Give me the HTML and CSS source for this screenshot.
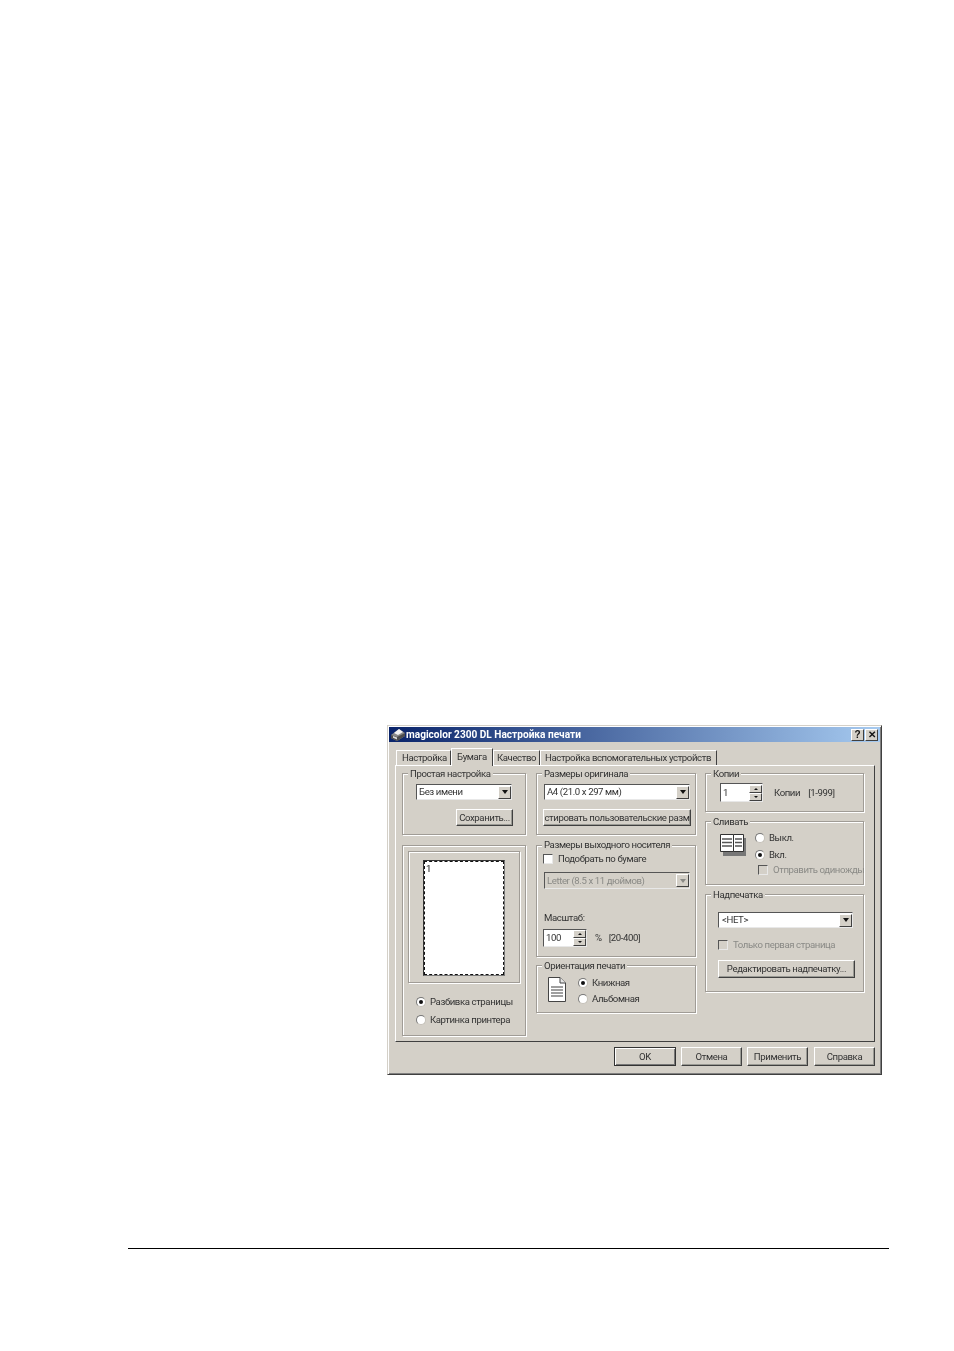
FILE: index.html
```html
<!DOCTYPE html>
<html lang="ru">
<head>
<meta charset="utf-8">
<title>magicolor 2300 DL</title>
<link rel="stylesheet" href="styles.css">
</head>
<body>
<main class="page">
  <section class="dialog">
    <header class="titlebar">
      <svg class="app-icon" width="14" height="12" viewBox="0 0 14 12">
        <path d="M0 6 L8 0 L14 4 L14 7 L6 12 L0 9Z" fill="#8a8a8a"/>
        <path d="M3 4 L8 0 L12 3 L7 6Z" fill="#f4f4f4"/>
        <path d="M0 6 L6 8 L14 4 L14 7 L6 12 L0 9Z" fill="#4c4c4c"/>
        <path d="M2 7 L6 8.5 L6 10.5 L2 8.8Z" fill="#dcdcdc"/>
      </svg>
      <span class="title-text">magicolor 2300 DL Настройка печати</span>
      <span class="title-buttons">
        <span class="cap-btn">?</span>
        <span class="cap-btn">✕</span>
      </span>
    </header>

    <nav class="tabs">
      <span class="tab tab-1">Настройка</span>
      <span class="tab tab-active">Бумага</span>
      <span class="tab tab-3">Качество</span>
      <span class="tab tab-4">Настройка вспомогательных устройств</span>
    </nav>

    <div class="panel">
      <div class="col col-1">
        <div class="group g-easy">
          <div class="legend">Простая настройка</div>
          <div class="combo combo-easy"><span class="combo-text">Без имени</span><span class="combo-arrow"><i></i></span></div>
          <div class="btn btn-save">Сохранить...</div>
        </div>
        <div class="group g-preview">
          <div class="preview-frame">
            <div class="sheet"><div class="sheet-inner">1</div></div>
          </div>
          <div class="radio-line rl-1"><span class="radio on"></span>Разбивка страницы</div>
          <div class="radio-line rl-2"><span class="radio"></span>Картинка принтера</div>
        </div>
      </div>

      <div class="col col-2">
        <div class="group g-orig">
          <div class="legend">Размеры оригинала</div>
          <div class="combo combo-orig"><span class="combo-text">A4 (21.0 x 297 мм)</span><span class="combo-arrow"><i></i></span></div>
          <div class="btn btn-custom">стировать пользовательские разм</div>
        </div>
        <div class="group g-out">
          <div class="legend legend-high">Размеры выходного носителя</div>
          <div class="check-line cl-fit"><span class="check"></span>Подобрать по бумаге</div>
          <div class="combo combo-out disabled"><span class="combo-text">Letter (8.5 x 11 дюймов)</span><span class="combo-arrow"><i></i></span></div>
          <div class="label-scale">Масштаб:</div>
          <div class="spin-line scale-line">
            <div class="spin spin-scale"><span class="spin-text">100</span><span class="spin-btns"><b><i class="up"></i></b><b><i></i></b></span></div>
            <span class="pct">%</span><span class="range">[20-400]</span>
          </div>
        </div>
        <div class="group g-orient">
          <div class="legend">Ориентация печати</div>
          <div class="orient-body">
            <svg class="doc-icon" width="18" height="25" viewBox="0 0 18 25">
              <path d="M.5.5H12L17.5 6V24.5H.5Z" fill="#fff" stroke="#444"/>
              <path d="M12 .5V6H17.5" fill="#e8e8e8" stroke="#444"/>
              <path d="M3 10H15M3 13H15M3 16H15M3 19H15" stroke="#808080" stroke-width="1.4"/>
            </svg>
            <div class="orient-options">
              <div class="radio-line"><span class="radio on"></span>Книжная</div>
              <div class="radio-line"><span class="radio"></span>Альбомная</div>
            </div>
          </div>
        </div>
      </div>

      <div class="col col-3">
        <div class="group g-copies">
          <div class="legend">Копии</div>
          <div class="spin-line copies-line">
            <div class="spin spin-copies"><span class="spin-text">1</span><span class="spin-btns"><b><i class="up"></i></b><b><i></i></b></span></div>
            <span class="copies-label">Копии</span><span class="range">[1-999]</span>
          </div>
        </div>
        <div class="group g-collate">
          <div class="legend">Сливать</div>
          <div class="collate-body">
            <svg class="collate-icon" width="26" height="22" viewBox="0 0 26 22">
              <path d="M3 4H26V22H3Z" fill="#777"/>
              <path d="M.5.5H13.5V17.5H.5Z" fill="#fff" stroke="#333"/>
              <path d="M2 5H12M2 8.5H12M2 12H12" stroke="#555" stroke-width="1.3"/>
              <path d="M13.5 .5H23.5V17.5H13.5Z" fill="#fff" stroke="#333"/>
              <path d="M15 5H22M15 8.5H22M15 12H22" stroke="#555" stroke-width="1.3"/>
            </svg>
            <div class="collate-options">
              <div class="radio-line"><span class="radio"></span>Выкл.</div>
              <div class="radio-line"><span class="radio on"></span>Вкл.</div>
            </div>
          </div>
          <div class="check-line cl-once disabled"><span class="check"></span>Отправить одиножды</div>
        </div>
        <div class="group g-stamp">
          <div class="legend">Надпечатка</div>
          <div class="combo combo-stamp"><span class="combo-text">&lt;НЕТ&gt;</span><span class="combo-arrow"><i></i></span></div>
          <div class="check-line cl-first disabled"><span class="check"></span>Только первая страница</div>
          <div class="btn btn-edit">Редактировать надпечатку...</div>
        </div>
      </div>
    </div>

    <footer class="actions">
      <div class="btn btn-ok">OK</div>
      <div class="btn btn-action">Отмена</div>
      <div class="btn btn-action">Применить</div>
      <div class="btn btn-action btn-help">Справка</div>
    </footer>
  </section>
  <hr class="rule">
</main>
</body>
</html>
```

FILE: styles.css
```css
* { box-sizing: border-box; }
html, body { margin: 0; padding: 0; background: #fff; }
.page { width: 954px; height: 1351px; padding-top: 725px; overflow: hidden; }

.dialog {
  width: 495px; height: 350px; margin-left: 387px;
  background: #d4d0c8; padding: 1px;
  border: 1px solid; border-color: #d4d0c8 #404040 #404040 #d4d0c8;
  box-shadow: inset 1px 1px 0 #fff, inset -1px -1px 0 #808080;
  font: 9.6px/12px Roboto, "Liberation Sans", sans-serif;
  letter-spacing: -.4px;
  color: #333;
  filter: blur(.35px);
}

.titlebar {
  height: 15px; display: flex; align-items: center; padding-left: 2px;
  background: linear-gradient(90deg, #0a246a, #a6caf0);
}
.app-icon { flex: none; margin-right: 1px; }
.title-text { color: #fff; font-weight: 700; font-size: 10.1px; letter-spacing: 0; }
.title-buttons { margin-left: auto; display: flex; margin-right: 2px; }
.cap-btn {
  width: 13px; height: 12px; background: #d4d0c8; color: #111;
  border: 1px solid; border-color: #fff #404040 #404040 #fff;
  font: 700 10px/10px "Liberation Sans", sans-serif; letter-spacing: 0; text-align: center;
}
.cap-btn + .cap-btn { margin-left: 1px; }

.tabs { height: 23px; display: flex; align-items: flex-end; padding-left: 7px; }
.tab {
  height: 15px; padding-top: 1px; white-space: nowrap;
  border-left: 1px solid #fff; border-top: 1px solid #fff; border-right: 1px solid #404040;
}
.tab-1 { width: 55px; padding-left: 5px; }
.tab-active { width: 42px; height: 18px; padding: 2px 0 0 5px; position: relative; z-index: 1; margin-bottom: -1px; background: #d4d0c8; }
.tab-3 { width: 47px; padding-left: 3px; }
.tab-4 { width: 177px; padding-left: 4px; }

.panel {
  height: 277px; width: 480px; margin-left: 6px; padding: 7px 10px 0 6px;
  display: flex;
  border: 1px solid; border-color: #fff #404040 #404040 #fff;
}
.col { display: flex; flex-direction: column; }
.col-1 { width: 124px; margin-right: 10px; gap: 10px; }
.col-2 { width: 160px; margin-right: 9px; }
.col-3 { width: 159px; gap: 9px; }

.group {
  border: 1px solid #a09c96;
  box-shadow: 1px 1px 0 #fff, inset 1px 1px 0 #fff;
  flex: none;
}
.legend {
  width: fit-content; margin: -6px 0 -1px 5px; padding: 0 2px;
  background: #d4d0c8; white-space: nowrap;
}
.legend-high { margin-top: -7px; margin-bottom: 0; }

.g-easy { height: 62px; }
.g-preview { height: 191px; padding: 5px; }
.g-orig { height: 62px; }
.g-out { height: 112px; margin-top: 10px; }
.g-orient { height: 48px; margin-top: 8px; }
.g-copies { height: 39px; }
.g-collate { height: 64px; }
.g-stamp { height: 98px; }

.combo {
  height: 16px; background: #fff; display: flex; align-items: center;
  border: 1px solid; border-color: #555 #e8e8e8 #e8e8e8 #555;
}
.combo-text { flex: 1; padding-left: 2px; white-space: nowrap; overflow: hidden; }
.combo-arrow {
  flex: none; width: 13px; height: 13px; background: #d4d0c8;
  border: 1px solid; border-color: #fff #404040 #404040 #fff;
  display: flex; align-items: center; justify-content: center;
}
.combo-arrow i { width: 0; height: 0; border: 3.5px solid transparent; border-top: 4px solid #111; border-bottom: 0; }
.combo.disabled { background: #d4d0c8; color: #8a8a86; }
.combo.disabled .combo-arrow i { border-top-color: #8a8a86; }

.combo-easy { width: 96px; margin: 5px 0 0 13px; }
.btn {
  height: 18px; background: #d4d0c8; display: flex; align-items: center; justify-content: center;
  border: 1px solid; border-color: #fff #404040 #404040 #fff;
  box-shadow: inset -1px -1px 0 #9a9a94;
  white-space: nowrap;
}
.btn-save { width: 57px; height: 17px; margin: 9px 0 0 53px; }

.preview-frame {
  height: 132px; border: 1px solid #a09c96; box-shadow: 1px 1px 0 #fff, inset 1px 1px 0 #fff;
  padding: 8px 0 0 14px;
}
.sheet { width: 82px; height: 116px; background: #fff; border: 1px solid; border-color: #333 #777 #777 #333; }
.sheet-inner { height: 100%; border: 1px dashed #111; padding-left: 1px; line-height: 14px; color: #111; }

.radio-line { display: flex; align-items: center; white-space: nowrap; }
.radio {
  flex: none; width: 10px; height: 10px; border-radius: 50%; background: #fff; margin-right: 4px;
  border: 1px solid #c4c0b8; border-top-color: #777; border-left-color: #777;
  display: flex; align-items: center; justify-content: center;
}
.radio.on::after { content: ""; width: 4px; height: 4px; border-radius: 50%; background: #111; }
.rl-1 { margin: 13px 0 0 8px; }
.rl-2 { margin: 6px 0 0 8px; }

.combo-orig { width: 146px; margin: 5px 0 0 7px; }
.btn-custom { width: 148px; height: 17px; margin: 9px 0 0 6px; }

.check-line { display: flex; align-items: center; white-space: nowrap; }
.check { flex: none; width: 10px; height: 10px; background: #fff; margin-right: 5px;
  border: 1px solid; border-color: #555 #e8e8e8 #e8e8e8 #555; }
.check-line.disabled { color: #8a8a86; }
.check-line.disabled .check { background: #d4d0c8; }
.cl-fit { margin: 2px 0 0 6px; }
.combo-out { width: 146px; height: 17px; margin: 7px 0 0 7px; }
.label-scale { margin: 23px 0 0 7px; }
.spin-line { display: flex; align-items: center; white-space: nowrap; }
.scale-line { margin: 5px 0 0 6px; }
.spin {
  height: 18px; background: #fff; display: flex; align-items: center;
  border: 1px solid; border-color: #555 #e8e8e8 #e8e8e8 #555;
}
.spin-text { flex: 1; padding-left: 2px; }
.spin-btns { flex: none; width: 13px; display: flex; flex-direction: column; }
.spin-btns b {
  height: 8px; background: #d4d0c8; display: flex; align-items: center; justify-content: center;
  border: 1px solid; border-color: #fff #404040 #404040 #fff;
}
.spin-btns i { width: 0; height: 0; border: 2px solid transparent; border-top: 2px solid #111; border-bottom: 0; }
.spin-btns i.up { border-top: 0; border-bottom: 2px solid #111; }
.spin-scale { width: 44px; }
.pct { margin-left: 8px; }
.range { margin-left: 7px; }

.orient-body { display: flex; padding: 6px 0 0 11px; }
.doc-icon { flex: none; }
.orient-options { margin-left: 12px; display: flex; flex-direction: column; gap: 4px; }

.copies-line { margin: 4px 0 0 14px; }
.spin-copies { width: 43px; height: 19px; }
.copies-label { margin-left: 11px; }
.copies-line .range { margin-left: 8px; }

.collate-body { display: flex; padding: 5px 0 0 14px; }
.collate-icon { flex: none; margin-top: 2px; }
.collate-options { margin-left: 9px; display: flex; flex-direction: column; gap: 5px; }
.cl-once { margin: 3px 0 0 52px; }

.combo-stamp { width: 135px; margin: 12px 0 0 12px; }
.combo-stamp .combo-text { padding-left: 3px; }
.cl-first { margin: 11px 0 0 12px; }
.btn-edit { width: 137px; margin: 9px 0 0 12px; }

.actions { display: flex; justify-content: flex-end; gap: 5px; padding: 5px 5px 0 0; }
.actions .btn { height: 19px; width: 61px; }
.actions .btn-ok { width: 62px; border-color: #333; box-shadow: inset 1px 1px 0 #fff, inset -1px -1px 0 #777; }
.actions .btn-help { margin-left: 1px; }

.rule { width: 761px; height: 1px; margin: 173px 0 0 128px; padding: 0; border: 0; background: #000; }
```
